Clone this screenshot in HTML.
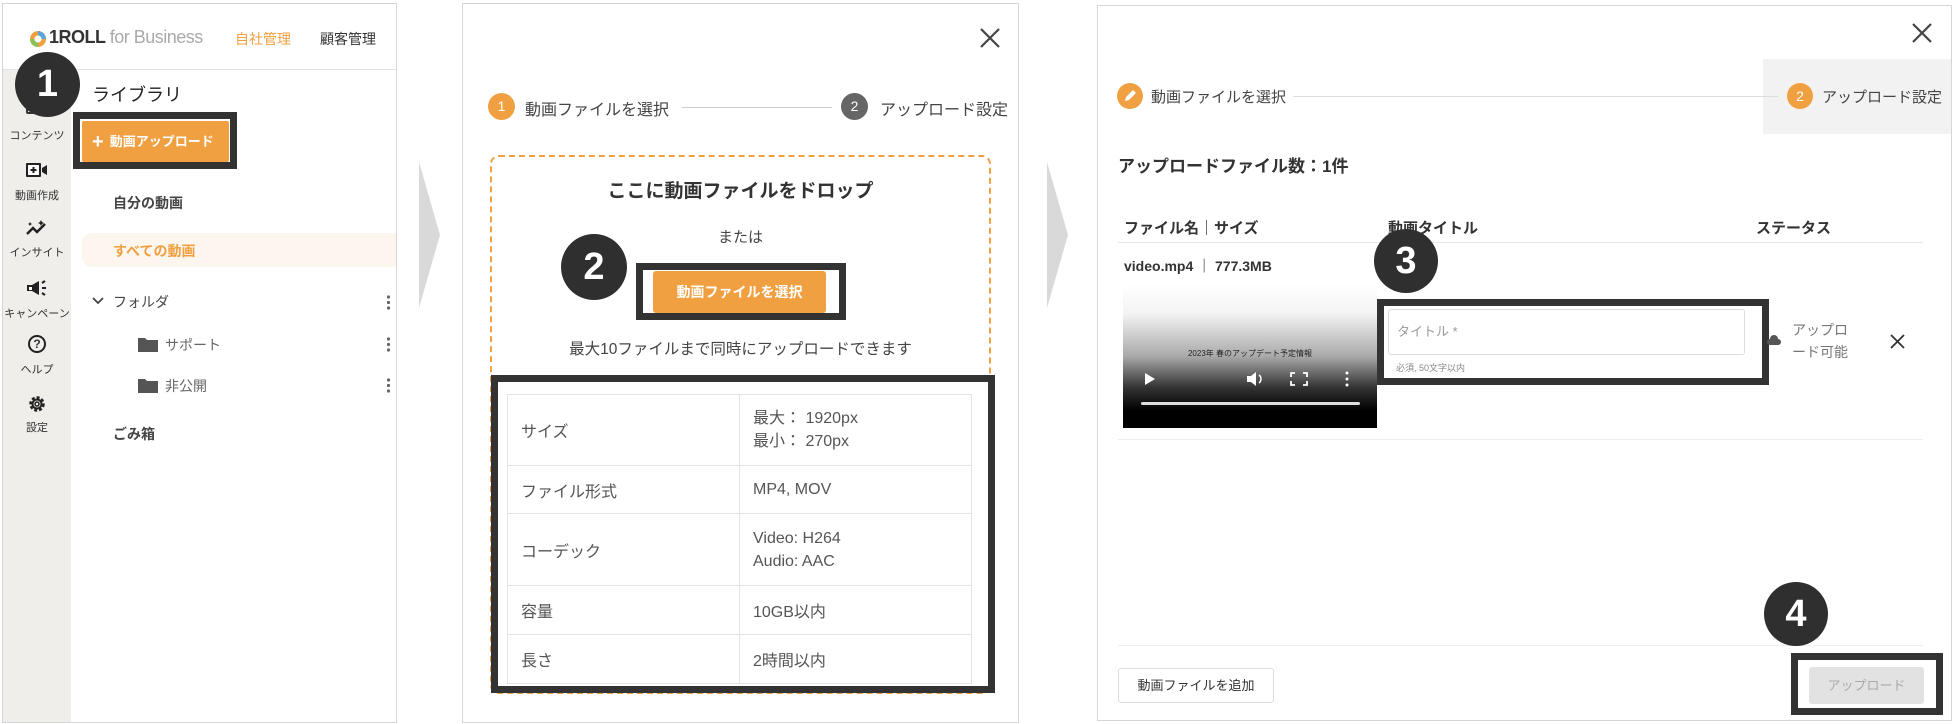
<!DOCTYPE html>
<html><head><meta charset="utf-8">
<style>
*{margin:0;padding:0;box-sizing:border-box}
body{width:1952px;height:724px;background:#fff;position:relative;overflow:hidden;font-family:"Liberation Sans","Noto Sans CJK JP",sans-serif;color:#333}
.a{position:absolute;white-space:nowrap}
.panel{position:absolute;border:1px solid #d6d6d6;background:#fff}
.badge{position:absolute;border-radius:50%;background:#2f2f2f;color:#fff;font-weight:bold;font-size:38px;display:flex;align-items:center;justify-content:center;font-family:"Liberation Sans",sans-serif}
.bbox{position:absolute;border:7px solid #333}
.sl{position:absolute;width:70px;text-align:center;font-size:11px;color:#333}
td{border:1px solid #e3e3e3;font-size:16px;color:#555;padding-left:13px;vertical-align:middle}
</style></head><body>

<!-- Panel 1 -->
<div class="panel" style="left:2px;top:3px;width:395px;height:720px"></div>
<div class="a" style="left:3px;top:70px;width:68px;height:652px;background:#efeeeb"></div>
<div class="a" style="left:3px;top:69px;width:393px;height:1px;background:#e2e2e2"></div>
<svg class="a" style="left:29px;top:30px" width="18" height="18" viewBox="0 0 18 18"><circle cx="9" cy="9" r="8" fill="#f0a040"/><path d="M9 1a8 8 0 0 1 8 8H9z" fill="#5aa6d8"/><path d="M1 9a8 8 0 0 0 8 8V9z" fill="#8ac25a"/><circle cx="9" cy="9" r="3.5" fill="#fff"/></svg>
<div class="a" style="left:49px;top:27px;font-size:18px;font-weight:bold;color:#333;letter-spacing:-0.5px">1ROLL <span style="font-weight:normal;color:#aaa">for Business</span></div>
<div class="a" style="left:235px;top:29px;font-size:14px;color:#f0a040">自社管理</div>
<div class="a" style="left:320px;top:29px;font-size:14px;color:#333">顧客管理</div>
<div class="a" style="left:92px;top:81px;font-size:18px;color:#222">ライブラリ</div>

<!-- sidebar -->
<div class="a" style="left:26px;top:100px;width:16px;height:14px;border:2px solid #333;border-radius:2px"></div>
<div class="sl" style="left:2px;top:127px">コンテンツ</div>
<svg class="a" style="left:26px;top:163px" width="22" height="14" viewBox="0 0 22 14"><rect x="0" y="0" width="15" height="14" rx="1" fill="#222"/><rect x="2" y="2" width="11" height="10" fill="#fff"/><path d="M7.5 4v6M4.5 7h6" stroke="#222" stroke-width="2"/><path d="M16 5l5-3v10l-5-3z" fill="#222"/></svg>
<div class="sl" style="left:2px;top:187px">動画作成</div>
<svg class="a" style="left:26px;top:220px" width="22" height="16" viewBox="0 0 22 16"><path d="M1 14l6-6 4 4 8-8" stroke="#222" stroke-width="2.5" fill="none"/><path d="M15 0l1 2 2 1-2 1-1 2-1-2-2-1 2-1z M4 2l.7 1.3L6 4l-1.3.7L4 6l-.7-1.3L2 4l1.3-.7z" fill="#222"/></svg>
<div class="sl" style="left:2px;top:244px">インサイト</div>
<svg class="a" style="left:26px;top:280px" width="22" height="16" viewBox="0 0 22 16"><path d="M1 5h5l7-4v14l-7-4H1z" fill="#222"/><rect x="3" y="7" width="3" height="3" fill="#fff"/><path d="M16 3l3-2M16 8h4M16 13l3 2" stroke="#222" stroke-width="2"/></svg>
<div class="sl" style="left:2px;top:305px">キャンペーン</div>
<div class="a" style="left:28px;top:335px;width:18px;height:18px;border:2px solid #222;border-radius:50%;font-size:12px;font-weight:bold;text-align:center;line-height:14px">?</div>
<div class="sl" style="left:2px;top:361px">ヘルプ</div>
<svg class="a" style="left:27px;top:394px" width="20" height="20" viewBox="0 0 20 20"><circle cx="10" cy="10" r="6.5" fill="none" stroke="#222" stroke-width="2.5" stroke-dasharray="3 2"/><circle cx="10" cy="10" r="4.5" fill="none" stroke="#222" stroke-width="2"/><circle cx="10" cy="10" r="2" fill="none" stroke="#222" stroke-width="1.5"/></svg>
<div class="sl" style="left:2px;top:419px">設定</div>

<div class="badge" style="left:15px;top:52px;width:65px;height:65px">1</div>
<div class="bbox" style="left:73px;top:112px;width:164px;height:57px"></div>
<div class="a" style="left:82px;top:121px;width:147px;height:41px;background:#f0a040;border-radius:2px;color:#fff;font-size:13px;font-weight:bold;line-height:41px;padding-left:10px"><span style="font-size:20px;vertical-align:-2px;margin-right:6px">+</span>動画アップロード</div>

<div class="a" style="left:113px;top:193px;font-size:14px;font-weight:bold;color:#444">自分の動画</div>
<div class="a" style="left:82px;top:233px;width:314px;height:34px;background:#fdf6ee;border-radius:10px 0 0 10px"></div>
<div class="a" style="left:113px;top:241px;font-size:14px;font-weight:bold;color:#f0a040">すべての動画</div>
<svg class="a" style="left:92px;top:297px" width="12" height="8" viewBox="0 0 12 8"><path d="M1 1l5 5 5-5" stroke="#444" stroke-width="1.8" fill="none"/></svg>
<div class="a" style="left:113px;top:292px;font-size:14px;color:#444">フォルダ</div>
<svg class="a" style="left:138px;top:337px" width="20" height="15" viewBox="0 0 20 15"><path d="M0 1h7l2 2h11v12H0z" fill="#555"/></svg>
<div class="a" style="left:165px;top:335px;font-size:14px;color:#666">サポート</div>
<svg class="a" style="left:138px;top:378px" width="20" height="15" viewBox="0 0 20 15"><path d="M0 1h7l2 2h11v12H0z" fill="#555"/></svg>
<div class="a" style="left:165px;top:376px;font-size:14px;color:#666">非公開</div>
<div class="a" style="left:113px;top:424px;font-size:14px;font-weight:bold;color:#444">ごみ箱</div>
<svg class="a" style="left:386px;top:295px" width="5" height="15"><circle cx="2.5" cy="2" r="1.6" fill="#666"/><circle cx="2.5" cy="7.5" r="1.6" fill="#666"/><circle cx="2.5" cy="13" r="1.6" fill="#666"/></svg>
<svg class="a" style="left:386px;top:337px" width="5" height="15"><circle cx="2.5" cy="2" r="1.6" fill="#666"/><circle cx="2.5" cy="7.5" r="1.6" fill="#666"/><circle cx="2.5" cy="13" r="1.6" fill="#666"/></svg>
<svg class="a" style="left:386px;top:378px" width="5" height="15"><circle cx="2.5" cy="2" r="1.6" fill="#666"/><circle cx="2.5" cy="7.5" r="1.6" fill="#666"/><circle cx="2.5" cy="13" r="1.6" fill="#666"/></svg>

<!-- arrows -->
<svg class="a" style="left:419px;top:162px" width="22" height="146"><path d="M0 0L21 73 0 146z" fill="#d9d9d9"/></svg>
<svg class="a" style="left:1047px;top:162px" width="22" height="146"><path d="M0 0L21 73 0 146z" fill="#d9d9d9"/></svg>

<!-- Panel 2 -->
<div class="panel" style="left:462px;top:3px;width:557px;height:720px"></div>
<svg class="a" style="left:979px;top:27px" width="22" height="22"><path d="M2 2l18 18M20 2L2 20" stroke="#444" stroke-width="2.2"/></svg>
<div class="a" style="left:488px;top:93px;width:27px;height:27px;border-radius:50%;background:#f0a040;color:#fff;font-size:14px;text-align:center;line-height:27px">1</div>
<div class="a" style="left:525px;top:96px;font-size:16px;color:#444">動画ファイルを選択</div>
<div class="a" style="left:682px;top:107px;width:150px;height:1px;background:#ccc"></div>
<div class="a" style="left:841px;top:93px;width:27px;height:27px;border-radius:50%;background:#666;color:#fff;font-size:14px;text-align:center;line-height:27px">2</div>
<div class="a" style="left:880px;top:96px;font-size:16px;color:#444">アップロード設定</div>
<div class="a" style="left:490px;top:155px;width:501px;height:539px;border:2px dashed #f0a040;border-radius:9px"></div>
<div class="a" style="left:490px;top:176px;width:501px;text-align:center;font-size:19px;font-weight:bold;color:#333">ここに動画ファイルをドロップ</div>
<div class="a" style="left:490px;top:226px;width:501px;text-align:center;font-size:15px;color:#444">または</div>
<div class="badge" style="left:561px;top:234px;width:66px;height:66px">2</div>
<div class="bbox" style="left:636px;top:263px;width:210px;height:57px"></div>
<div class="a" style="left:653px;top:271px;width:173px;height:42px;background:#f0a040;border-radius:3px;color:#fff;font-size:14px;font-weight:bold;text-align:center;line-height:42px">動画ファイルを選択</div>
<div class="a" style="left:490px;top:337px;width:501px;text-align:center;font-size:15.5px;color:#444">最大10ファイルまで同時にアップロードできます</div>
<div class="bbox" style="left:491px;top:375px;width:504px;height:318px"></div>
<table class="a" style="left:507px;top:394px;width:465px;height:289px;border-collapse:collapse;background:#fff">
<tr style="height:71px"><td style="width:232px">サイズ</td><td style="line-height:23px">最大： 1920px<br>最小： 270px</td></tr>
<tr style="height:48px"><td>ファイル形式</td><td>MP4, MOV</td></tr>
<tr style="height:72px"><td>コーデック</td><td style="line-height:23px">Video: H264<br>Audio: AAC</td></tr>
<tr style="height:49px"><td>容量</td><td>10GB以内</td></tr>
<tr style="height:49px"><td>長さ</td><td>2時間以内</td></tr>
</table>

<!-- Panel 3 -->
<div class="panel" style="left:1097px;top:5px;width:855px;height:716px"></div>
<svg class="a" style="left:1911px;top:22px" width="22" height="22"><path d="M2 2l18 18M20 2L2 20" stroke="#444" stroke-width="2.2"/></svg>
<div class="a" style="left:1763px;top:59px;width:188px;height:75px;background:#f2f2f2"></div>
<div class="a" style="left:1117px;top:83px;width:26px;height:26px;border-radius:50%;background:#f0a040"></div>
<svg class="a" style="left:1122px;top:88px" width="16" height="16"><path d="M3 13l1-4 7-7 3 3-7 7z" fill="#fff"/></svg>
<div class="a" style="left:1151px;top:86px;font-size:15px;color:#444">動画ファイルを選択</div>
<div class="a" style="left:1293px;top:96px;width:485px;height:1px;background:#ddd"></div>
<div class="a" style="left:1787px;top:83px;width:26px;height:26px;border-radius:50%;background:#f0a040;color:#fff;font-size:14px;text-align:center;line-height:26px">2</div>
<div class="a" style="left:1822px;top:86px;font-size:15px;color:#444">アップロード設定</div>
<div class="a" style="left:1118px;top:152px;font-size:17px;font-weight:bold;color:#333">アップロードファイル数：1件</div>
<div class="a" style="left:1124px;top:217px;font-size:15px;font-weight:bold;color:#333">ファイル名｜サイズ</div>
<div class="a" style="left:1388px;top:217px;font-size:15px;font-weight:bold;color:#333">動画タイトル</div>
<div class="a" style="left:1756px;top:217px;font-size:15px;font-weight:bold;color:#333">ステータス</div>
<div class="a" style="left:1118px;top:242px;width:805px;height:1px;background:#e6e6e6"></div>
<div class="a" style="left:1124px;top:256px;font-size:14px;font-weight:bold;color:#333">video.mp4 ｜ 777.3MB</div>
<div class="a" style="left:1123px;top:284px;width:254px;height:144px;background:linear-gradient(#fff 0%,#f4f4f4 20%,#aaa 50%,#333 72%,#000 88%)"></div>
<div class="a" style="left:1123px;top:348px;width:254px;text-align:center;font-size:8px;color:#222">2023年 春のアップデート予定情報</div>
<svg class="a" style="left:1140px;top:371px" width="220" height="36"><path d="M5 2v12l10-6z" fill="#fff"/><path d="M107 5h4l5-4v14l-5-4h-4z" fill="#fff"/><path d="M119 4a5 5 0 0 1 0 8" stroke="#fff" stroke-width="1.5" fill="none"/><path d="M155 2h-4v4M163 2h4v4M155 14h-4v-4M163 14h4v-4" stroke="#fff" stroke-width="1.8" fill="none"/><circle cx="207" cy="2" r="1.5" fill="#fff"/><circle cx="207" cy="8" r="1.5" fill="#fff"/><circle cx="207" cy="14" r="1.5" fill="#fff"/><rect x="1" y="31" width="219" height="3" rx="1.5" fill="#ddd"/></svg>
<div class="badge" style="left:1374px;top:229px;width:64px;height:64px">3</div>
<div class="bbox" style="left:1377px;top:299px;width:392px;height:86px"></div>
<div class="a" style="left:1388px;top:309px;width:357px;height:46px;border:1px solid #ddd;border-radius:3px;font-size:13px;color:#999;line-height:44px;padding-left:8px">タイトル *</div>
<div class="a" style="left:1396px;top:361px;font-size:9px;color:#888">必須, 50文字以内</div>
<svg class="a" style="left:1767px;top:334px" width="14" height="14"><path d="M3 11a3 3 0 0 1 0-6 4 4 0 0 1 8 0 3 3 0 0 1 0 6z" fill="#555"/></svg>
<div class="a" style="left:1792px;top:319px;font-size:14px;color:#777;line-height:22px">アップロ<br>ード可能</div>
<svg class="a" style="left:1890px;top:334px" width="15" height="15"><path d="M1 1l13 13M14 1L1 14" stroke="#333" stroke-width="1.8"/></svg>
<div class="a" style="left:1118px;top:439px;width:805px;height:1px;background:#eee"></div>
<div class="a" style="left:1118px;top:645px;width:805px;height:1px;background:#eee"></div>
<div class="a" style="left:1118px;top:668px;width:156px;height:35px;border:1px solid #ddd;border-radius:3px;font-size:13px;color:#333;text-align:center;line-height:33px">動画ファイルを追加</div>
<div class="badge" style="left:1764px;top:582px;width:64px;height:64px">4</div>
<div class="bbox" style="left:1791px;top:653px;width:152px;height:62px"></div>
<div class="a" style="left:1809px;top:667px;width:115px;height:37px;background:#e2e2e2;border-radius:3px;font-size:13px;color:#aaa;text-align:center;line-height:37px">アップロード</div>
</body></html>
